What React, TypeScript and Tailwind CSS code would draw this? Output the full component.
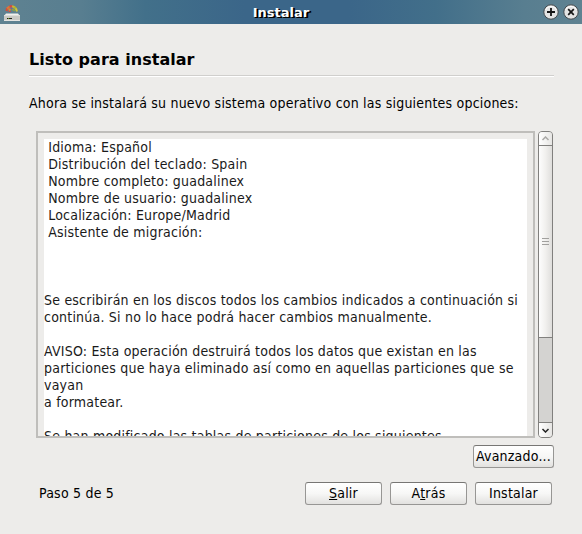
import type { ReactNode } from "react";

const summary = ` Idioma: Español
 Distribución del teclado: Spain
 Nombre completo: guadalinex
 Nombre de usuario: guadalinex
 Localización: Europe/Madrid
 Asistente de migración:



Se escribirán en los discos todos los cambios indicados a continuación si
continúa. Si no lo hace podrá hacer cambios manualmente.

AVISO: Esta operación destruirá todos los datos que existan en las
particiones que haya eliminado así como en aquellas particiones que se
vayan
a formatear.

Se han modificado las tablas de particiones de los siguientes`;

function Button({ children, wide }: { children: ReactNode; wide?: boolean }) {
  return (
    <button
      className={`flex h-[23px] items-start justify-center rounded-[3px] border border-[#979694] border-t-[#777674] bg-gradient-to-b from-white via-[#f7f7f6] to-[#e2e1df] pt-[2px] leading-[17px] tracking-[0.21px] whitespace-nowrap ${wide ? "w-[81px]" : "w-[77px]"}`}
    >
      <span>{children}</span>
    </button>
  );
}

function DiskIcon() {
  return (
    <svg width="16" height="16" viewBox="0 0 16 16" fill="none">
      <path d="M2.6 6L3.2 3" stroke="#cf4f3d" strokeWidth="2.4" />
      <path d="M3 3.4L6 1.4" stroke="#d9773a" strokeWidth="2.4" />
      <path d="M5.5 1.4h3" stroke="#d8453c" strokeWidth="2.4" />
      <path d="M8 1.3l2.8 1" stroke="#cdb030" strokeWidth="2.4" />
      <path d="M10.2 2l2.2 2.2" stroke="#a9b234" strokeWidth="2.4" />
      <path d="M12 3.5l1 3" stroke="#d3c43a" strokeWidth="2" />
      <path d="M4.8 5.4l2-1.6" stroke="#d98a2c" strokeWidth="2" />
      <path d="M6.5 3.5h2.3" stroke="#6a63a0" strokeWidth="1.8" />
      <path d="M8 4.3l3 1.4" stroke="#8fa33d" strokeWidth="1.8" />
      <path d="M4.5 6.5h2.5" stroke="#c94b4b" />
      <path d="M2 8.5h12l2 2.5H0z" fill="#f1f1ee" />
      <path d="M0 11h16v5H0z" fill="#c9c9c4" />
      <path d="M0 10.5h16" stroke="#dededa" />
      <path d="M0 15.5h16" stroke="#e4e4e1" />
      <path d="M3 13.5h5" stroke="#20241a" />
      <path d="M4 13.5h1" stroke="#6c9822" />
    </svg>
  );
}

function WindowButton({ kind }: { kind: "plus" | "close" }) {
  return (
    <svg width="16" height="16" viewBox="0 0 16 16" fill="none">
      <circle cx="8" cy="8" r="7.2" fill="#e4e4e3" stroke="#464b4e" />
      <path d="M2.5 6a6 6 0 0 1 11 0" stroke="#fff" />
      {kind === "plus" ? (
        <path d="M4 8h8M8 4v8" stroke="#151515" strokeWidth="1.8" />
      ) : (
        <path d="M5.2 5.2l5.6 5.6M10.8 5.2l-5.6 5.6" stroke="#151515" strokeWidth="1.7" />
      )}
    </svg>
  );
}

function Scrollbar() {
  return (
    <div className="flex h-[307px] w-[15px] flex-col overflow-hidden rounded-[4px] border border-[#81807e] bg-[#d4d3d1]">
      <div className="flex h-[14px] items-center justify-center border-b border-[#81807e] bg-gradient-to-r from-white to-[#e7e6e4]">
        <svg width="9" height="5" viewBox="0 0 9 5" fill="none">
          <path d="M1.5 4l3-3 3 3" stroke="#aaa9a7" strokeWidth="1.5" />
        </svg>
      </div>
      <div className="flex h-[192px] flex-col items-center justify-center gap-[2px] border-b border-[#81807e] bg-gradient-to-r from-[#fdfdfd] via-[#f1f0ee] to-[#dfdedc]">
        <div className="h-px w-[7px] bg-[#a1a09e]" />
        <div className="h-px w-[7px] bg-[#a1a09e]" />
        <div className="h-px w-[7px] bg-[#a1a09e]" />
      </div>
      <div className="flex-1 border-b border-[#81807e]" />
      <div className="flex h-[14px] items-center justify-center bg-gradient-to-r from-white to-[#e7e6e4]">
        <svg width="9" height="5" viewBox="0 0 9 5" fill="none">
          <path d="M1.5 1l3 3 3-3" stroke="#242424" strokeWidth="1.5" />
        </svg>
      </div>
    </div>
  );
}

export default function App() {
  return (
    <div className="h-[534px] w-[582px] overflow-hidden bg-[#edecea] font-['DejaVu_Sans_Condensed','DejaVu_Sans',sans-serif] text-[14px] leading-[17px] tracking-[0.21px] text-black [font-stretch:condensed]">
      <header className="flex h-[24px] items-center bg-[linear-gradient(90deg,#5f8291_0%,#587e90_14%,#42708a_25%,#3b6689_42%,#3b6689_60%,#426f8a_75%,#587e90_90%,#5f8291_100%)] pr-[3px] pl-[4px]">
        <div className="w-[16px] pt-px">
          <DiskIcon />
        </div>
        <h1 className="flex-1 pr-px text-center font-['DejaVu_Sans',sans-serif] text-[13px] font-bold tracking-normal text-white [font-stretch:normal] [text-shadow:1px_1px_0_#000,2px_1px_0_#000]">Instalar</h1>
        <div className="flex w-[36px] gap-[4px]">
          <WindowButton kind="plus" />
          <WindowButton kind="close" />
        </div>
      </header>
      <main className="pt-[26px] pr-[28px] pl-[29px]">
        <h2 className="h-[25px] font-['DejaVu_Sans',sans-serif] text-[16px] leading-[20px] font-bold tracking-[0.03px] [font-stretch:normal]">Listo para instalar</h2>
        <div className="h-[2px] border-t border-b border-t-[#d0cfcd] border-b-white" />
        <p className="mt-[18px] whitespace-nowrap">Ahora se instalará su nuevo sistema operativo con las siguientes opciones:</p>
        <div className="mt-[19px] ml-[7px] flex gap-[3px]">
          <div className="h-[307px] w-[499px] overflow-hidden border-2 border-[#bfbebb] px-[6px] pt-[6px]">
            <pre className="h-[297px] overflow-hidden bg-white font-[inherit] text-[#1a1a1a]">{summary}</pre>
          </div>
          <Scrollbar />
        </div>
        <div className="mt-[7px] flex justify-end">
          <Button wide>Avanzado...</Button>
        </div>
        <footer className="mt-[14px] flex items-center justify-between pr-[2px] pl-[10px]">
          <span>Paso 5 de 5</span>
          <div className="flex gap-[8px]">
            <Button><span><u>S</u>alir</span></Button>
            <Button><span>A<u>t</u>rás</span></Button>
            <Button>Instalar</Button>
          </div>
        </footer>
      </main>
    </div>
  );
}
